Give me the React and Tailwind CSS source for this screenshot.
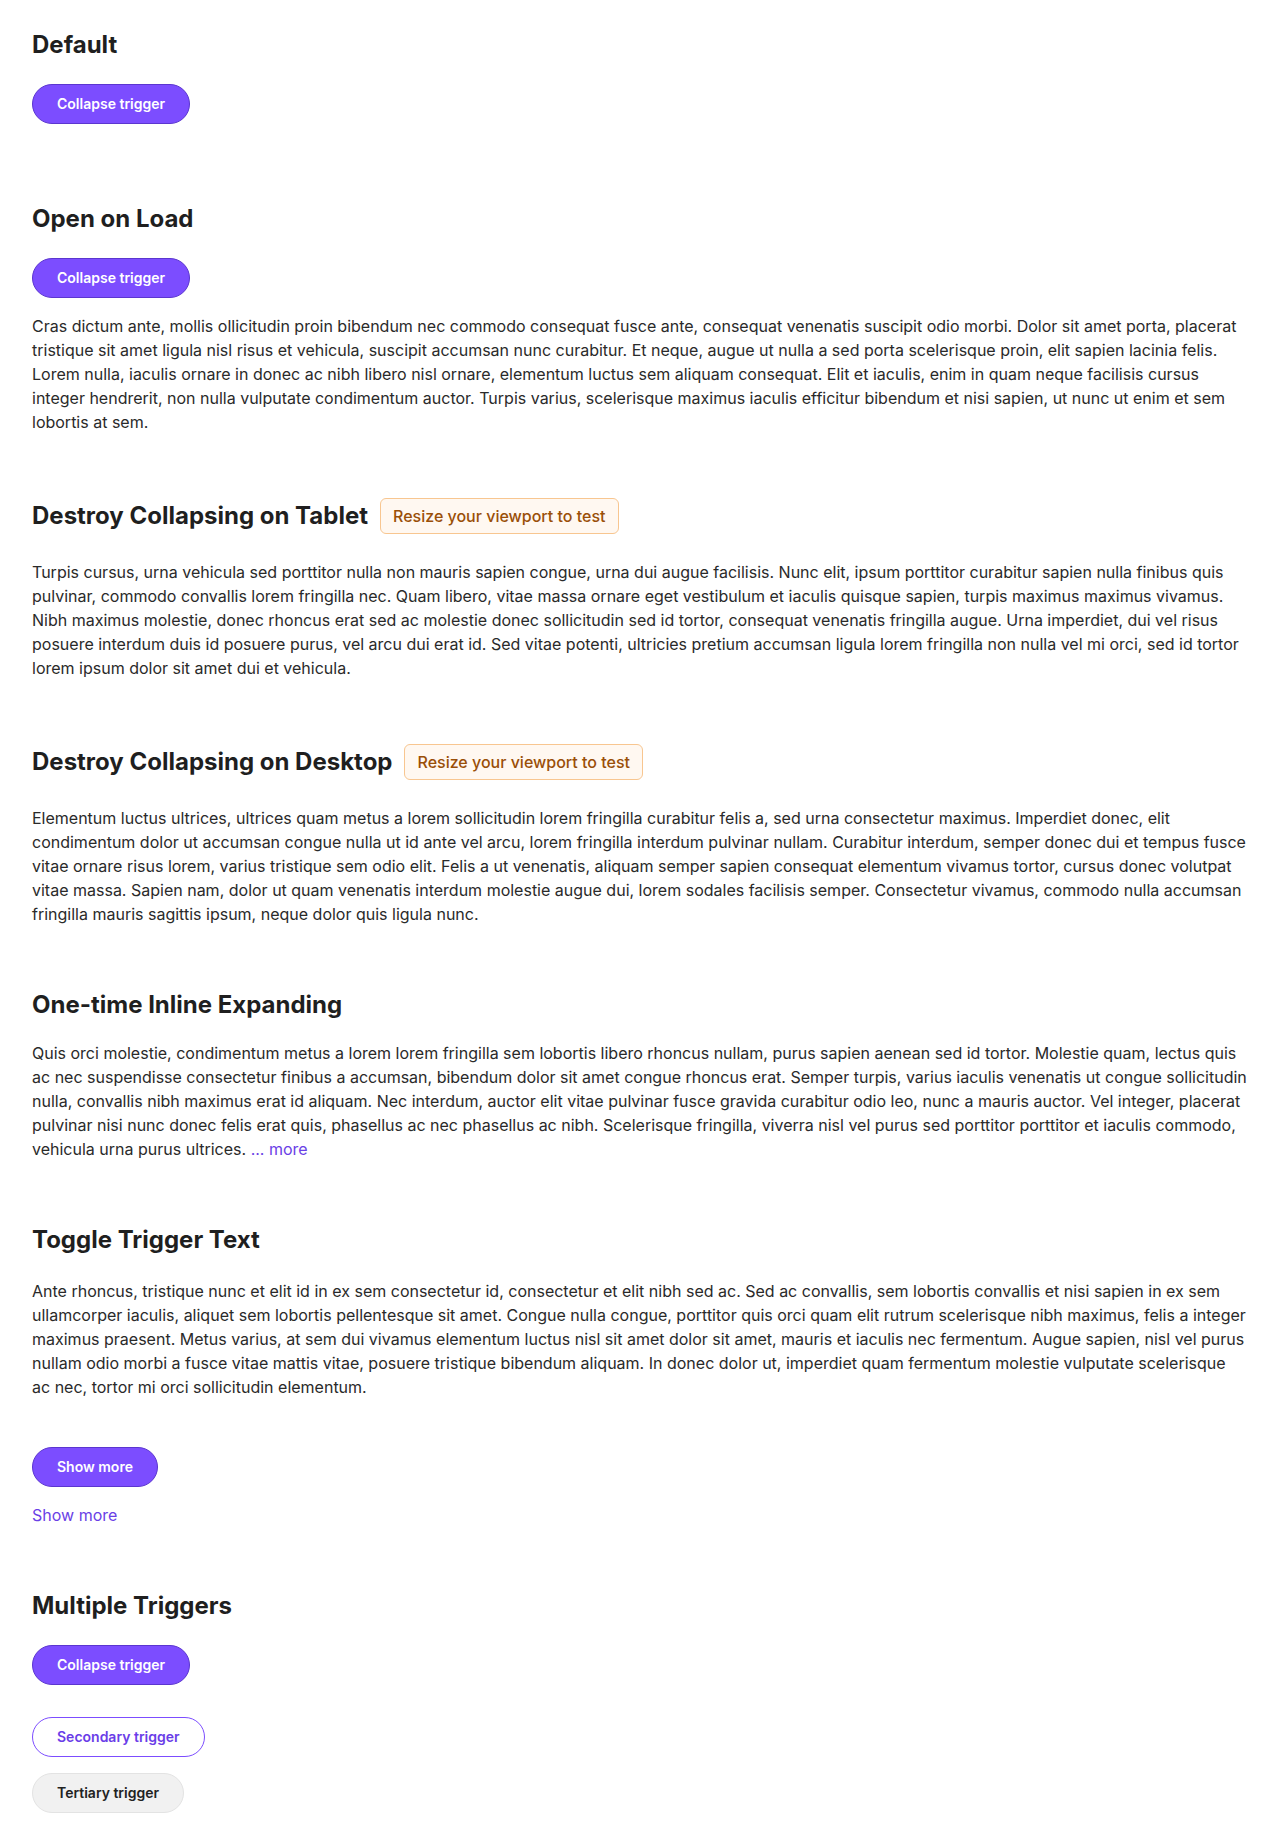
const sections = {
  openOnLoad:
    "Cras dictum ante, mollis ollicitudin proin bibendum nec commodo consequat fusce ante, consequat venenatis suscipit odio morbi. Dolor sit amet porta, placerat tristique sit amet ligula nisl risus et vehicula, suscipit accumsan nunc curabitur. Et neque, augue ut nulla a sed porta scelerisque proin, elit sapien lacinia felis. Lorem nulla, iaculis ornare in donec ac nibh libero nisl ornare, elementum luctus sem aliquam consequat. Elit et iaculis, enim in quam neque facilisis cursus integer hendrerit, non nulla vulputate condimentum auctor. Turpis varius, scelerisque maximus iaculis efficitur bibendum et nisi sapien, ut nunc ut enim et sem lobortis at sem.",
  tablet:
    "Turpis cursus, urna vehicula sed porttitor nulla non mauris sapien congue, urna dui augue facilisis. Nunc elit, ipsum porttitor curabitur sapien nulla finibus quis pulvinar, commodo convallis lorem fringilla nec. Quam libero, vitae massa ornare eget vestibulum et iaculis quisque sapien, turpis maximus maximus vivamus. Nibh maximus molestie, donec rhoncus erat sed ac molestie donec sollicitudin sed id tortor, consequat venenatis fringilla augue. Urna imperdiet, dui vel risus posuere interdum duis id posuere purus, vel arcu dui erat id. Sed vitae potenti, ultricies pretium accumsan ligula lorem fringilla non nulla vel mi orci, sed id tortor lorem ipsum dolor sit amet dui et vehicula.",
  desktop:
    "Elementum luctus ultrices, ultrices quam metus a lorem sollicitudin lorem fringilla curabitur felis a, sed urna consectetur maximus. Imperdiet donec, elit condimentum dolor ut accumsan congue nulla ut id ante vel arcu, lorem fringilla interdum pulvinar nullam. Curabitur interdum, semper donec dui et tempus fusce vitae ornare risus lorem, varius tristique sem odio elit. Felis a ut venenatis, aliquam semper sapien consequat elementum vivamus tortor, cursus donec volutpat vitae massa. Sapien nam, dolor ut quam venenatis interdum molestie augue dui, lorem sodales facilisis semper. Consectetur vivamus, commodo nulla accumsan fringilla mauris sagittis ipsum, neque dolor quis ligula nunc.",
  inline:
    "Quis orci molestie, condimentum metus a lorem lorem fringilla sem lobortis libero rhoncus nullam, purus sapien aenean sed id tortor. Molestie quam, lectus quis ac nec suspendisse consectetur finibus a accumsan, bibendum dolor sit amet congue rhoncus erat. Semper turpis, varius iaculis venenatis ut congue sollicitudin nulla, convallis nibh maximus erat id aliquam. Nec interdum, auctor elit vitae pulvinar fusce gravida curabitur odio leo, nunc a mauris auctor. Vel integer, placerat pulvinar nisi nunc donec felis erat quis, phasellus ac nec phasellus ac nibh. Scelerisque fringilla, viverra nisl vel purus sed porttitor porttitor et iaculis commodo, vehicula urna purus ultrices.",
  toggle:
    "Ante rhoncus, tristique nunc et elit id in ex sem consectetur id, consectetur et elit nibh sed ac. Sed ac convallis, sem lobortis convallis et nisi sapien in ex sem ullamcorper iaculis, aliquet sem lobortis pellentesque sit amet. Congue nulla congue, porttitor quis orci quam elit rutrum scelerisque nibh maximus, felis a integer maximus praesent. Metus varius, at sem dui vivamus elementum luctus nisl sit amet dolor sit amet, mauris et iaculis nec fermentum. Augue sapien, nisl vel purus nullam odio morbi a fusce vitae mattis vitae, posuere tristique bibendum aliquam. In donec dolor ut, imperdiet quam fermentum molestie vulputate scelerisque ac nec, tortor mi orci sollicitudin elementum.",
};

// primary pill button
const Trigger = ({ children }) => (
  <button className="inline-flex items-center h-10 px-6 rounded-full bg-[#7c4dff] border border-[#5b36cf] text-white text-sm font-semibold">
    {children}
  </button>
);

const Badge = () => (
  <span className="inline-flex items-center h-9 px-3 rounded-md border border-[#f8c690] bg-[#fff8f1] text-[#9a4f08] text-base font-medium">
    Resize your viewport to test
  </span>
);

const Heading = ({ children }) => (
  <h2 className="text-2xl leading-[30px] font-bold text-[#1f1f1f]">
    {children}
  </h2>
);

const Text = ({ children }) => (
  <p className="text-base leading-6 text-[#2a2a2a]">{children}</p>
);

export default function App() {
  return (
    <div
      className="px-8 pt-[30px] pb-8 bg-white flex flex-col gap-16"
      style={{ fontFamily: "Inter, 'Noto Sans', sans-serif" }}
    >
      {/* Default */}
      <section>
        <Heading>Default</Heading>
        <div className="mt-6">
          <Trigger>Collapse trigger</Trigger>
        </div>
        <div className="mt-4 h-0 overflow-hidden" />
      </section>

      {/* Open on Load */}
      <section>
        <Heading>Open on Load</Heading>
        <div className="mt-6">
          <Trigger>Collapse trigger</Trigger>
        </div>
        <div className="mt-4">
          <Text>{sections.openOnLoad}</Text>
        </div>
      </section>

      {/* Destroy on tablet */}
      <section>
        <div className="flex items-center gap-3">
          <Heading>Destroy Collapsing on Tablet</Heading>
          <Badge />
        </div>
        <div className="mt-[26px]">
          <Text>{sections.tablet}</Text>
        </div>
      </section>

      {/* Destroy on desktop */}
      <section>
        <div className="flex items-center gap-3">
          <Heading>Destroy Collapsing on Desktop</Heading>
          <Badge />
        </div>
        <div className="mt-[26px]">
          <Text>{sections.desktop}</Text>
        </div>
      </section>

      {/* Inline expanding */}
      <section>
        <Heading>One-time Inline Expanding</Heading>
        <div className="mt-[21px]">
          <Text>
            {sections.inline}{" "}
            <a className="text-[#6a3fe6] cursor-pointer">... more</a>
          </Text>
        </div>
      </section>

      {/* Toggle trigger text */}
      <section>
        <Heading>Toggle Trigger Text</Heading>
        <div className="mt-6">
          <Text>{sections.toggle}</Text>
        </div>
        <div className="mt-12">
          <Trigger>Show more</Trigger>
        </div>
        <div className="mt-4 text-base leading-6 text-[#6a3fe6]">
          <a className="cursor-pointer">Show more</a>
        </div>
      </section>

      {/* Multiple triggers */}
      <section>
        <Heading>Multiple Triggers</Heading>
        <div className="mt-6">
          <Trigger>Collapse trigger</Trigger>
        </div>
        <div className="mt-4 h-0 overflow-hidden" />
        <div className="mt-4 flex flex-col items-start gap-4">
          <button className="inline-flex items-center h-10 px-6 rounded-full bg-white border border-[#7c4dff] text-[#6a3de8] text-sm font-semibold">
            Secondary trigger
          </button>
          <button className="inline-flex items-center h-10 px-6 rounded-full bg-[#f1f1f1] border border-[#e3e3e3] text-[#222222] text-sm font-semibold">
            Tertiary trigger
          </button>
        </div>
      </section>
    </div>
  );
}
